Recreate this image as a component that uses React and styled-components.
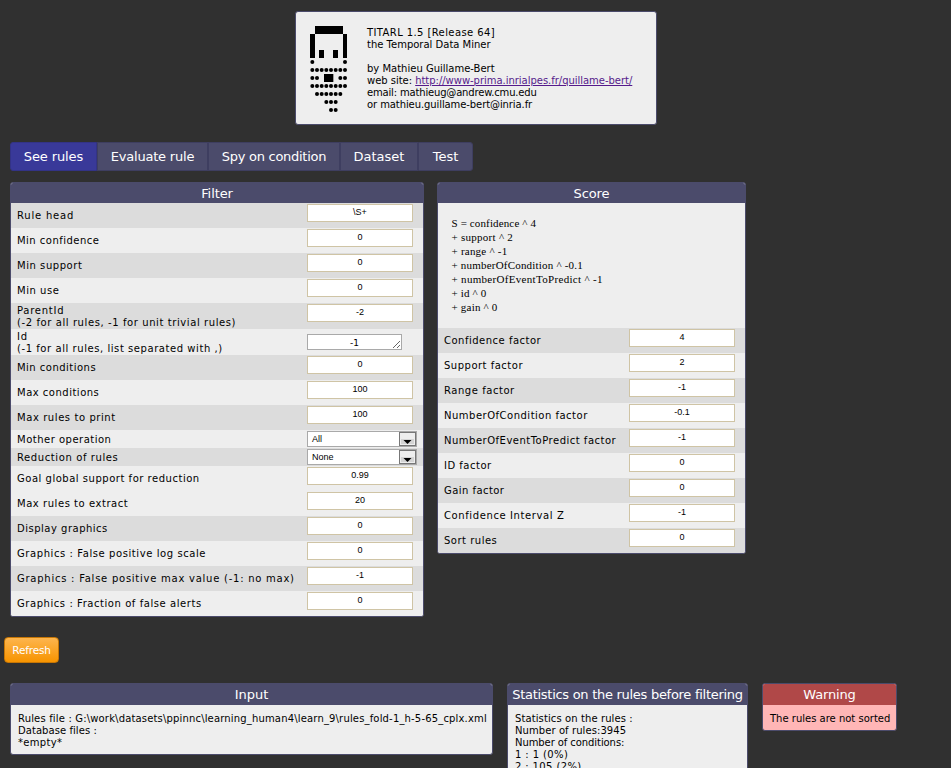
import React from "react";
import styled, { createGlobalStyle } from "styled-components";

const Global = createGlobalStyle`
  * { box-sizing: border-box; }
  body {
    margin: 0;
    background: #303030;
    color: #000;
    font-family: "DejaVu Sans", Verdana, sans-serif;
    font-size: 10px;
    line-height: 12px;
    overflow: hidden;
  }
`;

const Page = styled.main`
  width: 951px;
  height: 768px;
  overflow: hidden;
  padding-top: 11px;
`;

const Banner = styled.header`
  display: flex;
  gap: 20px;
  width: 362px;
  height: 114px;
  margin-left: 295px;
  padding: 14px;
  background: #eee;
  border: 1px solid #4b4b6b;
  border-radius: 3px;
`;

const Logo = styled.svg`
  display: block;
  width: 37px;
  height: 86px;
`;

const Lines = styled.div`
  padding-top: 1px;
  white-space: nowrap;
`;

const Line = styled.div`
  height: 12px;
  letter-spacing: ${(p) => p.$ls || 0}px;
`;

const SiteLink = styled.a`
  color: #551a8b;
  text-decoration: underline;
`;

const Tabs = styled.nav`
  display: flex;
  margin: 17px 0 0 10px;
`;

const Tab = styled.button`
  width: ${(p) => p.$w}px;
  height: 29px;
  padding: 0 0 1px;
  border: 1px solid ${(p) => (p.$active ? "#333386" : "#3e3e60")};
  background: ${(p) => (p.$active ? "#393999" : "#4b4b6b")};
  color: #fff;
  font: 13px "DejaVu Sans", sans-serif;
  letter-spacing: ${(p) => p.$ls || 0}px;
  white-space: nowrap;
  &:first-child { border-radius: 3px 0 0 3px; }
  &:last-child { border-radius: 0 3px 3px 0; }
`;

const Columns = styled.div`
  display: flex;
  align-items: flex-start;
  margin: ${(p) => p.$top}px 0 0 10px;
`;

const Panel = styled.section`
  flex: none;
  width: ${(p) => p.$w}px;
  height: ${(p) => p.$h}px;
  margin-right: ${(p) => p.$gap || 0}px;
  border: 1px solid #4b4b6b;
  border-radius: 3px;
  background: ${(p) => (p.$warning ? "#ffb6b6" : "#eee")};
  overflow: hidden;
`;

const PanelTitle = styled.h2`
  height: ${(p) => p.$h || 20}px;
  margin: 0;
  background: ${(p) => (p.$warning ? "#b04848" : "#4b4b6b")};
  color: #fff;
  font-size: 13px;
  font-weight: 400;
  line-height: 21px;
  letter-spacing: ${(p) => p.$ls || 0}px;
  text-align: center;
  white-space: nowrap;
`;

const Row = styled.div`
  display: grid;
  grid-template-columns: ${(p) => p.$label}px auto;
  justify-content: start;
  align-items: start;
  height: ${(p) => p.$h || 25}px;
  padding: 1px 0 0 6px;
  background: ${(p) => (p.$dark ? "#dcdcdc" : "#eee")};
`;

const Label = styled.label`
  align-self: center;
  white-space: nowrap;
`;

const LabelLine = styled.span`
  display: block;
  letter-spacing: ${(p) => p.$ls}px;
`;

const Field = styled.input`
  width: 106px;
  height: 18px;
  padding: 0 0 2px;
  border: 1px solid #cfc4a5;
  background: #fff;
  color: #000;
  font: 9px "Liberation Sans", Arial, sans-serif;
  text-align: center;
`;

const ListField = styled.textarea`
  display: block;
  width: 95px;
  height: 16px;
  margin-top: 4px;
  padding: 3px 0 0;
  border: 1px solid #a9a9a9;
  background: #fff;
  font: 9px/11px "DejaVu Sans", sans-serif;
  text-align: center;
  overflow: hidden;
`;

const Select = styled.div`
  display: flex;
  justify-content: space-between;
  width: 110px;
  height: 16px;
  padding-left: 4px;
  border: 1px solid #a9a9a9;
  background: #fff;
  font: 9px/14px "Liberation Sans", Arial, sans-serif;
`;

const Arrow = styled.svg`
  width: 17px;
  height: 14px;
`;

const Formula = styled.div`
  height: 125px;
  padding: 13px 0 0 13.5px;
  font: 11px/14px "Liberation Serif", "Times New Roman", serif;
  white-space: nowrap;
`;

const Term = styled.div`
  letter-spacing: ${(p) => p.$ls}px;
`;

const Refresh = styled.button`
  display: block;
  width: 55px;
  height: 26px;
  margin: 20px 0 20px 4px;
  padding: 0;
  border: 1px solid #c67605;
  border-radius: 4px;
  background: linear-gradient(#fdb54e, #f79400);
  color: #fff;
  font: 10.5px "DejaVu Sans", sans-serif;
  letter-spacing: -0.2px;
`;

const Content = styled.div`
  padding: 8px 7px 0;
  white-space: nowrap;
`;

const ALL = [67, 81, 95, 109, 123, 137, 151, 165];
const BEARD = [
  [171, [67, 165]],
  [195, ALL],
  [219, [67, 81, 151, 165]],
  [243, ALL],
  [267, ALL.slice(1, 7)],
  [291, [109, 123, 137]],
  [315, [123, 137]],
];

/* Each label is a list of [text, letter spacing] lines. */
const FILTERS = [
  { label: [["Rule head", 0.8]], value: "\\S+", dark: true },
  { label: [["Min confidence", 0.48]], value: "0" },
  { label: [["Min support", 0.55]], value: "0", dark: true },
  { label: [["Min use", 0.55]], value: "0" },
  {
    label: [["ParentId", 0.75], ["(-2 for all rules, -1 for unit trivial rules)", 0.59]],
    value: "-2", dark: true, h: 26,
  },
  {
    label: [["Id", 0.7], ["(-1 for all rules, list separated with ,)", 0.56]],
    value: "-1", h: 26, kind: "list",
  },
  { label: [["Min conditions", 0.48]], value: "0", dark: true },
  { label: [["Max conditions", 0.5]], value: "100" },
  { label: [["Max rules to print", 0.58]], value: "100", dark: true },
  { label: [["Mother operation", 0.5]], value: "All", h: 18, kind: "select" },
  { label: [["Reduction of rules", 0.6]], value: "None", dark: true, h: 18, kind: "select" },
  { label: [["Goal global support for reduction", 0.52]], value: "0.99" },
  { label: [["Max rules to extract", 0.55]], value: "20" },
  { label: [["Display graphics", 0.5]], value: "0", dark: true },
  { label: [["Graphics : False positive log scale", 0.58]], value: "0" },
  { label: [["Graphics : False positive max value (-1: no max)", 0.75]], value: "-1", dark: true },
  { label: [["Graphics : Fraction of false alerts", 0.56]], value: "0" },
];

const SCORES = [
  ["Confidence factor", "4", 0.5],
  ["Support factor", "2", 0.5],
  ["Range factor", "-1", 0.55],
  ["NumberOfCondition factor", "-0.1", 0.5],
  ["NumberOfEventToPredict factor", "-1", 0.5],
  ["ID factor", "0", 0.5],
  ["Gain factor", "0", 0.45],
  ["Confidence Interval Z", "-1", 0.6],
  ["Sort rules", "0", 0.5],
];

const FORMULA = [
  ["S = confidence ^ 4", 0.13],
  ["+ support ^ 2", 0.27],
  ["+ range ^ -1", 0.22],
  ["+ numberOfCondition ^ -0.1", 0.2],
  ["+ numberOfEventToPredict ^ -1", 0.31],
  ["+ id ^ 0", 0.15],
  ["+ gain ^ 0", 0.2],
];

function Control({ kind, value }) {
  if (kind === "list") return <ListField defaultValue={value} />;
  if (kind === "select")
    return (
      <Select>
        {value}
        <Arrow viewBox="0 0 17 14">
          <rect x="0.5" y="0.5" width="16" height="13" fill="#eee" stroke="#777" />
          <rect x="2" y="7" width="13" height="5" fill="#d4d4d4" />
          <path d="M4.5 8h8L8.5 12z" fill="#000" />
        </Arrow>
      </Select>
    );
  return <Field defaultValue={value} />;
}

export default function App() {
  return (
    <Page>
      <Global />
      <Banner>
        <Logo viewBox="60 63 111 258">
          <path d="M75 63h84v24h12v72h-12V87H75v72H60V87h15zM87 135h15v24H87zM129 135h15v24h-15zM102 207h28v24h-28z" />
          {BEARD.map(([y, xs]) => xs.map((x) => <circle key={`${x}-${y}`} cx={x} cy={y} r="6" />))}
        </Logo>
        <Lines>
          <Line $ls={0.4}>TITARL 1.5 [Release 64]</Line>
          <Line>the Temporal Data Miner</Line>
          <Line />
          <Line>by Mathieu Guillame-Bert</Line>
          <Line $ls={-0.03}>
            web site: <SiteLink>http://www-prima.inrialpes.fr/quillame-bert/</SiteLink>
          </Line>
          <Line $ls={-0.17}>email: mathieug@andrew.cmu.edu</Line>
          <Line $ls={-0.09}>or mathieu.guillame-bert@inria.fr</Line>
        </Lines>
      </Banner>
      <Tabs>
        <Tab $w={87} $ls={-0.12} $active>See rules</Tab>
        <Tab $w={111} $ls={-0.2}>Evaluate rule</Tab>
        <Tab $w={132} $ls={-0.28}>Spy on condition</Tab>
        <Tab $w={78}>Dataset</Tab>
        <Tab $w={55}>Test</Tab>
      </Tabs>
      <Columns $top={11}>
        <Panel $w={414} $h={435} $gap={13}>
          <PanelTitle $ls={-0.1}>Filter</PanelTitle>
          {FILTERS.map(({ label, value, dark, h, kind }) => (
            <Row key={label[0][0]} $label={290} $dark={dark} $h={h}>
              <Label>
                {label.map(([text, ls]) => (
                  <LabelLine key={text} $ls={ls}>{text}</LabelLine>
                ))}
              </Label>
              <Control kind={kind} value={value} />
            </Row>
          ))}
        </Panel>
        <Panel $w={309} $h={372}>
          <PanelTitle $ls={-0.1}>Score</PanelTitle>
          <Formula>
            {FORMULA.map(([text, ls]) => (
              <Term key={text} $ls={ls}>{text}</Term>
            ))}
          </Formula>
          {SCORES.map(([label, value, ls], i) => (
            <Row key={label} $label={185} $dark={i % 2 === 0}>
              <Label>
                <LabelLine $ls={ls}>{label}</LabelLine>
              </Label>
              <Control value={value} />
            </Row>
          ))}
        </Panel>
      </Columns>
      <Refresh>Refresh</Refresh>
      <Columns $top={0}>
        <Panel $w={483} $h={72} $gap={14}>
          <PanelTitle $h={21}>Input</PanelTitle>
          <Content>
            <Line $ls={0.165}>Rules file : G:\work\datasets\ppinnc\learning_human4\learn_9\rules_fold-1_h-5-65_cplx.xml</Line>
            <Line $ls={0.06}>Database files :</Line>
            <Line $ls={0.3}>*empty*</Line>
          </Content>
        </Panel>
        <Panel $w={241} $h={140} $gap={14}>
          <PanelTitle $h={21} $ls={-0.28}>Statistics on the rules before filtering</PanelTitle>
          <Content>
            <Line $ls={0.1}>Statistics on the rules :</Line>
            <Line $ls={0.08}>Number of rules:3945</Line>
            <Line $ls={-0.08}>Number of conditions:</Line>
            <Line $ls={0.4}>1 : 1 (0%)</Line>
            <Line $ls={0.38}>2 : 105 (2%)</Line>
          </Content>
        </Panel>
        <Panel $w={135} $h={48} $warning>
          <PanelTitle $h={21} $ls={-0.15} $warning>Warning</PanelTitle>
          <Content>
            <Line>The rules are not sorted</Line>
          </Content>
        </Panel>
      </Columns>
    </Page>
  );
}
